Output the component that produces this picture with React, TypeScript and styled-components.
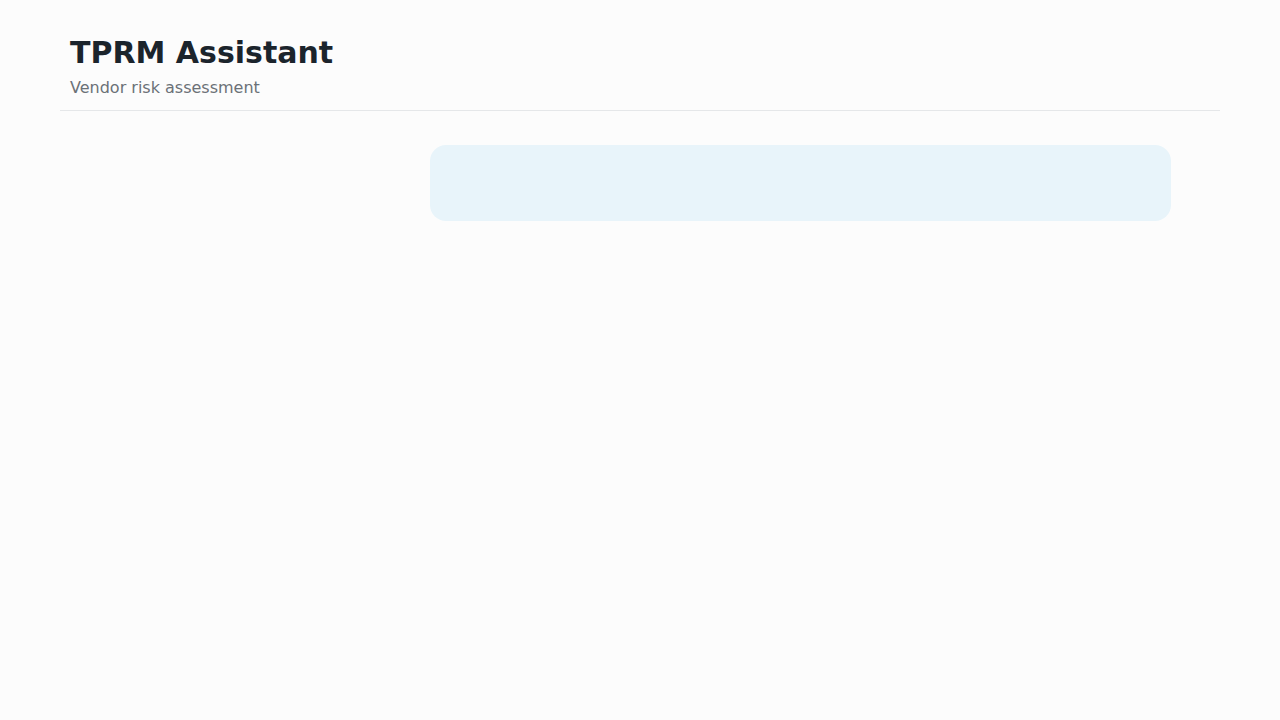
import React from "react";
import styled, { createGlobalStyle } from "styled-components";

const GlobalStyle = createGlobalStyle`
  html, body {
    margin: 0;
    padding: 0;
    background: #fcfcfc;
    font-family: "DejaVu Sans", "Liberation Sans", sans-serif;
  }
`;

const Page = styled.div`
  max-width: 1160px;
  margin: 0 auto;
  min-height: 720px;
`;

const Header = styled.header`
  padding: 35px 10px 12px;
  border-bottom: 1px solid #e5e7e9;
`;

const Title = styled.h1`
  margin: 0;
  font-size: 30px;
  font-weight: 700;
  line-height: 36px;
  color: #1b242c;
`;

const Subtitle = styled.p`
  margin: 7px 0 0;
  font-size: 16px;
  line-height: 20px;
  color: #6b7177;
`;

const Thread = styled.main`
  display: flex;
  flex-direction: column;
  align-items: flex-end;
  padding: 34px 49px 0 0;
`;

const Bubble = styled.div`
  width: 741px;
  height: 76px;
  border-radius: 16px;
  background: #e8f4fa;
`;

export default function App() {
  return (
    <>
      <GlobalStyle />
      <Page>
        <Header>
          <Title>TPRM Assistant</Title>
          <Subtitle>Vendor risk assessment</Subtitle>
        </Header>
        <Thread>
          <Bubble />
        </Thread>
      </Page>
    </>
  );
}
